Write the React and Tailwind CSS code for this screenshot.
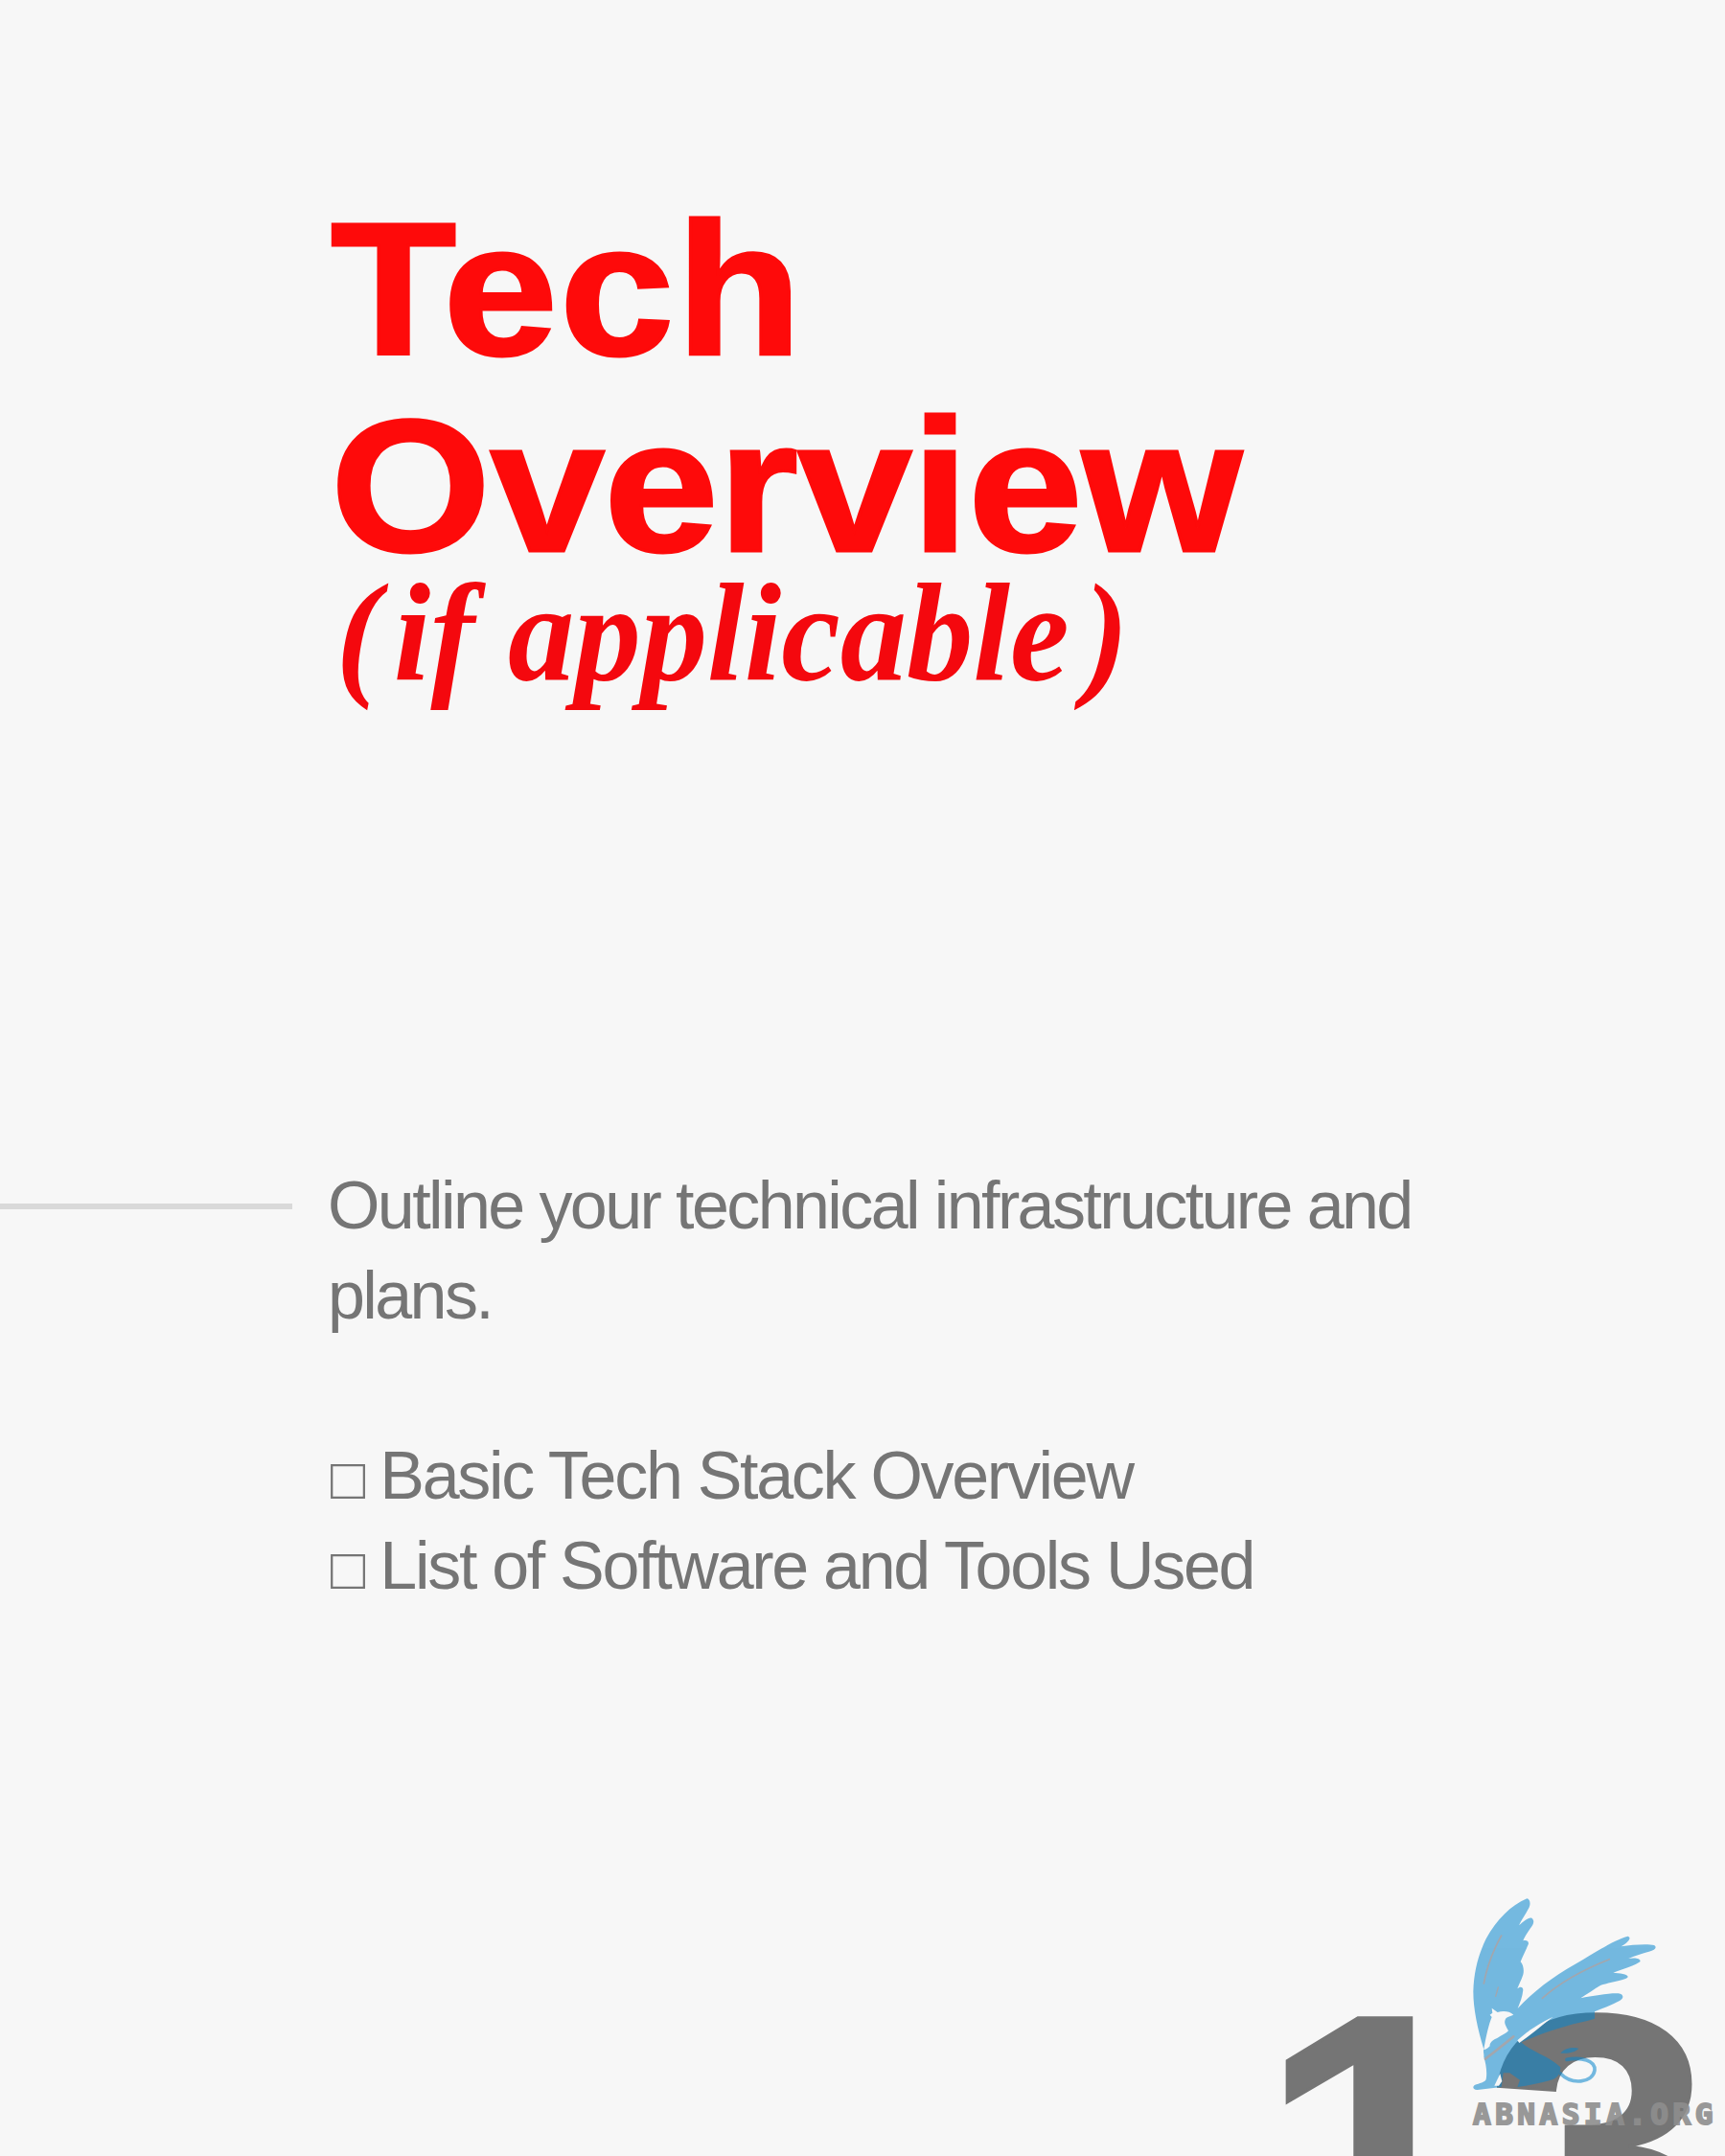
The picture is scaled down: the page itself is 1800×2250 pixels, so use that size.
import React from 'react';

const GRAY = 'text-[#757575]';

const Griffin = () => (
  <svg viewBox="0 0 1500 900" className="absolute bottom-0 right-0 w-[500px] h-[300px]">
    <g fill="#0986cd" opacity="0.55">
      {/* wings + upper body */}
      <path d="M880,94 C890,96 893,112 885,125 C875,145 862,162 855,178 C870,165 888,150 896,156 C905,165 900,176 890,188 C880,202 872,215 868,226 C878,222 888,228 884,238 C876,258 866,275 860,292 C868,300 872,318 868,332 C862,350 855,362 850,376 C858,368 868,370 868,380 C866,402 858,420 851,438 C900,385 960,340 1030,300 C1090,265 1150,225 1195,212 C1206,214 1205,226 1175,244 C1210,238 1260,236 1278,240 C1288,246 1282,256 1262,260 C1240,266 1220,272 1198,282 C1220,278 1238,282 1234,292 C1225,300 1180,316 1150,326 C1170,328 1198,330 1196,340 C1190,350 1140,356 1110,366 C1090,378 1070,392 1048,406 C1090,398 1150,388 1172,392 C1184,396 1182,408 1170,414 C1145,428 1115,438 1092,448 L1092,470 C1060,480 1030,484 1000,494 C965,504 935,514 910,524 L862,544 C890,572 945,585 985,622 C985,648 970,660 950,664 C920,672 885,680 850,684 L858,662 L826,640 L806,640 L800,684 L725,693 C712,694 708,684 716,678 C732,672 748,670 752,660 C756,640 752,610 745,590 C746,580 742,570 745,566 C725,500 712,440 712,385 C714,320 728,270 752,220 C785,160 830,115 880,94 Z" />
      {/* tail */}
      <path fill="none" stroke="#0986cd" strokeWidth="11" strokeLinecap="round" d="M985,642 C1020,678 1085,672 1092,632 C1095,600 1050,590 1005,598" />
      <path d="M985,578 C1000,560 1030,558 1042,564 C1030,575 1012,580 985,578 Z" />
    </g>
    {/* griffin figure in the background colour */}
    <path fill="#f7f7f7" d="M838,458 C825,446 805,445 788,450 L770,437 L772,452 L764,458 L770,465 C760,490 752,525 745,566 C748,570 758,562 764,556 C762,545 775,535 788,530 C800,522 815,516 822,508 C812,490 806,480 815,468 C822,462 830,462 838,458 Z" />
    <path fill="#f7f7f7" d="M962,464 C925,482 885,505 850,538 L856,546 C890,522 925,492 962,464 Z" />
    <path fill="#f7f7f7" d="M778,680 L796,642 L802,666 L792,680 Z" />
    {/* feather lines */}
    <g fill="none" stroke="#a3a6ad" strokeLinecap="round">
      <path strokeWidth="5" d="M800,210 C775,255 755,305 745,360" />
      <path strokeWidth="4" d="M790,372 L782,400" />
      <path strokeWidth="5" d="M1138,284 C1060,315 990,350 928,406" />
      <path strokeWidth="8" d="M838,526 C810,550 780,572 750,596" />
    </g>
  </svg>
);

export default function App() {
  return (
    <div className="relative w-[1800px] h-[2250px] overflow-hidden bg-[#f7f7f7] font-['Liberation_Sans',sans-serif]">
      {/* Heading */}
      <section className="pt-[200px] pl-[345px]">
        <h1 className="origin-left scale-x-[1.09] text-[#fe0a0a] text-[197px] leading-[205px] font-bold [-webkit-text-stroke:3px_#fe0a0a]">
          <div className="tracking-[2px]">Tech</div>
          <div className="tracking-[-0.5px]">Overview</div>
        </h1>
        <p className="origin-left scale-x-[0.95] mt-[-24px] pl-[6px] text-[#f4080e] font-['Liberation_Serif',serif] italic font-bold text-[146px] leading-[150px]">
          (<span className="tracking-[-22px]"> </span>if applicable<span className="tracking-[-20px]"> </span>)
        </p>
      </section>

      {/* Body copy with the rule on its left */}
      <section className="mt-[475px] flex items-start">
        <div className="mt-[45px] w-[305px] h-[6px] bg-[#d9d9d9] shrink-0" />
        <div className={`pl-[37px] text-[70px] leading-[94px] tracking-[-2.6px] ${GRAY}`}>
          <p>Outline your technical infrastructure and</p>
          <p>plans.</p>
          <p className="mt-[94px] h-[94px] tracking-[-2.3px]"><span className="ml-[3px] mr-[3px] text-[60px] leading-none">□ </span>Basic Tech Stack Overview</p>
          <p className="h-[94px] tracking-[-2.3px]"><span className="ml-[3px] mr-[3px] text-[60px] leading-none">□ </span>List of Software and Tools Used</p>
        </div>
      </section>

      {/* Page number, cut off by the page edge */}
      <div className={`absolute left-[1314px] top-[2043px] origin-left scale-x-[1.07] text-[400px] leading-[400px] font-bold whitespace-nowrap [-webkit-text-stroke:3px_#757575] ${GRAY}`}>
        <span className="tracking-[-3px]">1</span>3
      </div>

      <Griffin />
      <div className="absolute left-[1537px] top-[2190px] text-[#8e8e8e] opacity-90 font-['DejaVu_Sans_Mono',monospace] font-bold text-[31px] leading-[32px] tracking-[4.5px] whitespace-nowrap [-webkit-text-stroke:2px_#8e8e8e]">
        ABNASIA.ORG
      </div>
    </div>
  );
}
